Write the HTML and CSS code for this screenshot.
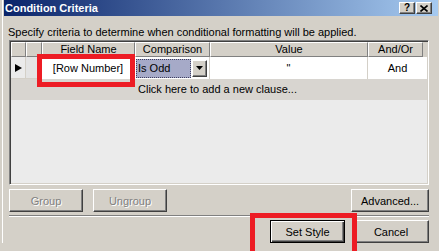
FILE: index.html
```html
<!DOCTYPE html>
<html>
<head>
<meta charset="utf-8">
<link rel="stylesheet" href="styles.css">
</head>
<body>
<div class="window">
  <div class="titlebar">
    <span class="title">Condition Criteria</span>
    <div class="tbtns">
      <span class="tbtn help">?</span>
      <span class="tbtn close"><svg width="8" height="7" viewBox="0 0 8 7"><path d="M0.5 0.5 L7.5 6.5 M7.5 0.5 L0.5 6.5" stroke="#000" stroke-width="1.6" fill="none"/></svg></span>
    </div>
  </div>
  <div class="content">
    <p class="intro">Specify criteria to determine when conditional formatting will be applied.</p>
    <div class="grid">
      <div class="hrow">
        <div class="hc w1"></div>
        <div class="hc w2"></div>
        <div class="hc w3">Field Name</div>
        <div class="hc w4">Comparison</div>
        <div class="hc w5">Value</div>
        <div class="hc w6">And/Or</div>
        <div class="hfill"></div>
      </div>
      <div class="drow">
        <div class="rh w1"><svg width="7" height="8" viewBox="0 0 7 8"><path d="M0 0 L7 4 L0 8 Z" fill="#000"/></svg></div>
        <div class="rh rh2 w2"></div>
        <div class="cell w3">[Row Number]</div>
        <div class="cell cmp w4">
          <span class="sel">Is Odd</span>
          <span class="dd"><svg width="7" height="4" viewBox="0 0 7 4"><path d="M0 0 L7 0 L3.5 4 Z" fill="#000"/></svg></span>
        </div>
        <div class="cell w5">"</div>
        <div class="cell last">And</div>
      </div>
      <div class="addrow"><span class="addtext">Click here to add a new clause...</span></div>
      <div class="empty"></div>
    </div>
    <div class="btnrow">
      <span class="btn disabled group">Group</span>
      <span class="btn disabled ungroup">Ungroup</span>
      <span class="spacer"></span>
      <span class="btn advanced">Advanced...</span>
    </div>
    <div class="sep"></div>
    <div class="btnrow bottom">
      <span class="btn default setstyle">Set Style</span>
      <span class="btn cancel">Cancel</span>
    </div>
  </div>
</div>
<div class="mark mark1"></div>
<div class="mark mark2"></div>
</body>
</html>
```
FILE: styles.css
```css
html, body {
  margin: 0;
  padding: 0;
}
body {
  width: 439px;
  height: 251px;
  overflow: hidden;
  position: relative;
  background: #d4d0c8;
  font-family: "Liberation Sans", Tahoma, sans-serif;
  font-size: 11px;
  color: #000;
}
.window {
  margin-left: 2px;
  border-left: 1px solid #ffffff;
  padding-left: 1px;
  width: 435px;
}
.titlebar {
  box-sizing: border-box;
  width: 434px;
  height: 16px;
  background: linear-gradient(to right, #0a246a, #a6caf0);
  display: flex;
  justify-content: space-between;
  align-items: flex-start;
  padding: 0 6px 0 1px;
}
.title {
  color: #fff;
  font-weight: bold;
  font-size: 11px;
  line-height: 16px;
}
.tbtns {
  display: flex;
  gap: 1px;
  padding-top: 2px;
}
.tbtn {
  box-sizing: border-box;
  width: 16px;
  height: 12px;
  background: #d4d0c8;
  border-top: 1px solid #fff;
  border-left: 1px solid #fff;
  border-right: 1px solid #404040;
  border-bottom: 1px solid #404040;
  box-shadow: inset -1px -1px 0 #808080;
  display: flex;
  align-items: center;
  justify-content: center;
  font-weight: bold;
  font-size: 10px;
  line-height: 10px;
}
.content {
  width: 434px;
}
.intro {
  margin: 10px 0 0 0;
  padding-left: 4px;
  line-height: 13px;
  height: 13px;
  white-space: nowrap;
}
.grid {
  box-sizing: border-box;
  margin: 1px 0 0 5px;
  width: 420px;
  height: 145px;
  border-top: 1px solid #808080;
  border-left: 1px solid #808080;
  border-right: 1px solid #ffffff;
  border-bottom: 1px solid #ffffff;
  box-shadow: inset 1px 1px 0 #404040, inset -1px -1px 0 #d4d0c8;
  padding: 1px;
  display: flex;
  flex-direction: column;
  background: #ebebeb;
}
.w1 { width: 15px; }
.w2 { width: 16px; }
.w3 { width: 93px; }
.w4 { width: 75px; }
.w5 { width: 158px; }
.w6 { width: 55px; }
.hrow {
  display: flex;
  height: 15px;
  background: #d4d0c8;
}
.hc {
  box-sizing: border-box;
  flex: none;
  height: 15px;
  border-top: 1px solid #fff;
  border-left: 1px solid #fff;
  border-right: 1px solid #808080;
  border-bottom: 1px solid #808080;
  text-align: center;
  line-height: 13px;
}
.hfill {
  flex: 1;
}
.drow {
  display: flex;
  height: 22px;
  background: #fff;
}
.rh {
  box-sizing: border-box;
  flex: none;
  background: #ebebeb;
  border-right: 1px solid #d4d0c8;
  border-bottom: 1px solid #d4d0c8;
  display: flex;
  align-items: center;
  padding-left: 4px;
}
.rh2 {
  background: #e4e4e4;
}
.cell {
  box-sizing: border-box;
  flex: none;
  border-right: 1px solid #d4d0c8;
  text-align: center;
  line-height: 22px;
  white-space: nowrap;
}
.cell.last {
  flex: 1;
  border-right: none;
}
.cmp {
  display: flex;
  align-items: center;
  padding: 0 2px 0 1px;
  text-align: left;
}
.sel {
  box-sizing: border-box;
  width: 57px;
  height: 19px;
  line-height: 17px;
  background: #a6aac8;
  border: 1px dotted #404060;
  padding-left: 1px;
}
.dd {
  box-sizing: border-box;
  width: 15px;
  height: 17px;
  margin-left: 1px;
  background: #d4d0c8;
  border-top: 1px solid #fff;
  border-left: 1px solid #fff;
  border-right: 1px solid #404040;
  border-bottom: 1px solid #404040;
  box-shadow: inset -1px -1px 0 #808080;
  display: flex;
  align-items: center;
  justify-content: center;
}
.addrow {
  height: 21px;
  background: #d8d5d0;
  line-height: 21px;
  padding-left: 127px;
}
.empty {
  flex: 1;
}
.btnrow {
  display: flex;
  margin: 4px 0 0 5px;
  width: 420px;
  gap: 10px;
}
.spacer {
  flex: 1;
}
.btn {
  box-sizing: border-box;
  height: 23px;
  background: #d4d0c8;
  border-top: 1px solid #fff;
  border-left: 1px solid #fff;
  border-right: 1px solid #404040;
  border-bottom: 1px solid #404040;
  box-shadow: inset -1px -1px 0 #808080;
  display: flex;
  align-items: center;
  justify-content: center;
  white-space: nowrap;
}
.btn.disabled {
  color: #808080;
  text-shadow: 1px 1px 0 #fff;
}
.group, .ungroup { width: 74px; }
.advanced { width: 78px; }
.sep {
  margin: 3px 0 0 5px;
  width: 420px;
  height: 1px;
  background: #808080;
  border-bottom: 1px solid #fff;
}
.btnrow.bottom {
  margin-top: 3px;
  justify-content: flex-end;
  gap: 8px;
}
.setstyle { width: 75px; }
.cancel { width: 76px; }
.btn.default {
  border: 1px solid #000;
  box-shadow: inset 1px 1px 0 #fff, inset -1px -1px 0 #404040, inset -2px -2px 0 #808080;
}
.mark {
  position: absolute;
  box-sizing: border-box;
  border: 5px solid #ed1c24;
}
.mark1 {
  left: 37px;
  top: 54px;
  width: 98px;
  height: 33px;
}
.mark2 {
  left: 250px;
  top: 213px;
  width: 107px;
  height: 45px;
}
```
